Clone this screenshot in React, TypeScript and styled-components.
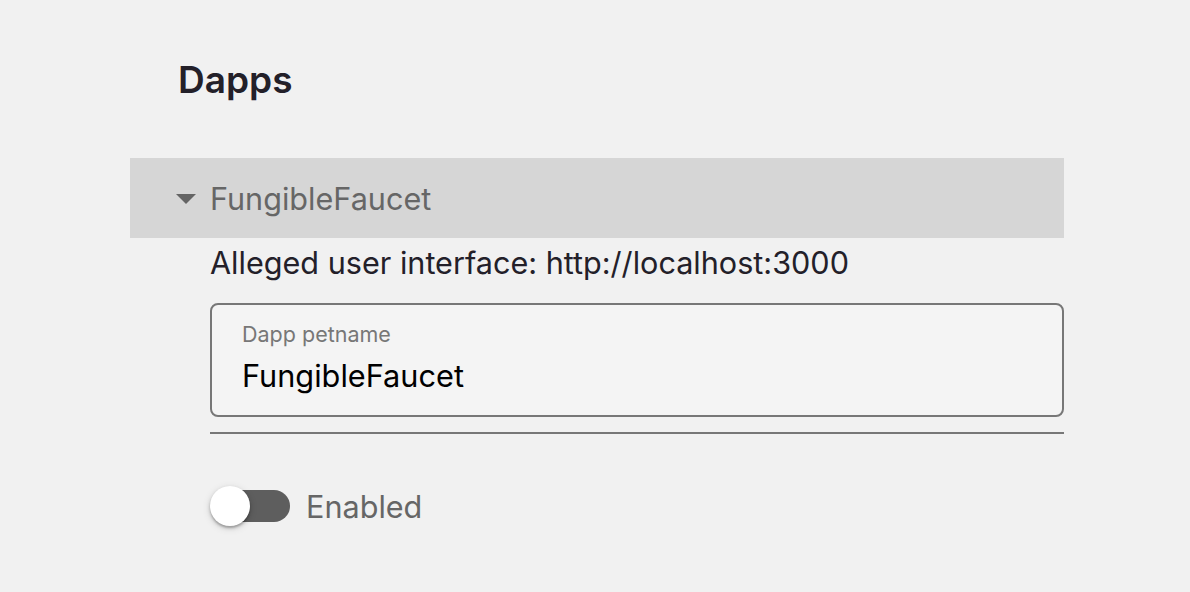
import React, { useState } from 'react';
import styled, { createGlobalStyle } from 'styled-components';

const GlobalStyle = createGlobalStyle`
  html, body {
    margin: 0;
    padding: 0;
    background: #f1f1f1;
    font-family: Inter, "Noto Sans", "Liberation Sans", sans-serif;
  }
`;

const Page = styled.div`
  width: 1190px;
  height: 592px;
  padding: 58px 126px 0 130px;
  box-sizing: border-box;
  background: #f1f1f1;
`;

const Title = styled.h1`
  margin: 0 0 0 48px;
  font-size: 37px;
  font-weight: 600;
  color: #232029;
  line-height: 44px;
`;

const Panel = styled.div`
  margin-top: 56px;
  width: 934px;
`;

const PanelHeader = styled.div`
  height: 80px;
  background: #d6d6d6;
  display: flex;
  align-items: center;
  padding-left: 46px;
  gap: 14px;
  cursor: pointer;
`;

const Caret = styled.span`
  width: 0;
  height: 0;
  border-left: 10px solid transparent;
  border-right: 10px solid transparent;
  border-top: 10px solid #646464;
  margin-top: 2px;
`;

const HeaderText = styled.span`
  font-size: 30.6px;
  color: #666666;
`;

const PanelBody = styled.div`
  padding: 5px 0 0 80px;
  display: flex;
  flex-direction: column;
`;

const Alleged = styled.div`
  font-size: 30.6px;
  color: #232029;
  line-height: 40px;
`;

const Field = styled.div`
  margin-top: 20px;
  height: 114px;
  border: 2px solid #777777;
  border-radius: 8px;
  background: #f4f4f4;
  box-sizing: border-box;
  padding: 16px 30px 0 30px;
  display: flex;
  flex-direction: column;
`;

const FieldLabel = styled.label`
  font-size: 21.5px;
  color: #777777;
  line-height: 26px;
`;

const FieldInput = styled.input`
  margin-top: 11px;
  border: none;
  outline: none;
  background: transparent;
  padding: 0;
  font-family: inherit;
  font-size: 30.7px;
  color: #000000;
  line-height: 36px;
`;

const Divider = styled.hr`
  margin: 15px 0 0 0;
  border: none;
  height: 2px;
  background: #777777;
`;

const SwitchRow = styled.label`
  margin-top: 51px;
  display: flex;
  align-items: center;
  gap: 14px;
  cursor: pointer;
`;

const SwitchBox = styled.span`
  position: relative;
  width: 82px;
  height: 42px;
  display: inline-flex;
  align-items: center;
`;

const Track = styled.span<{ on: boolean }>`
  margin-left: 8px;
  width: 72px;
  height: 32px;
  border-radius: 16px;
  background: ${props => (props.on ? '#3f51b5' : '#5e5e5e')};
`;

const Thumb = styled.span<{ on: boolean }>`
  position: absolute;
  top: 1px;
  left: ${props => (props.on ? '40px' : '0px')};
  width: 40px;
  height: 40px;
  border-radius: 50%;
  background: #ffffff;
  box-shadow: 0 2px 2px rgba(0, 0, 0, 0.2), 0 2px 4px rgba(0, 0, 0, 0.14), 0 2px 8px rgba(0, 0, 0, 0.12);
`;

const SwitchText = styled.span`
  font-size: 30.6px;
  color: #666666;
`;

const App = () => {
  const [name, setName] = useState('FungibleFaucet');
  const [enabled, setEnabled] = useState(false);

  return (
    <Page>
      <GlobalStyle />
      <Title>Dapps</Title>
      <Panel>
        <PanelHeader>
          <Caret />
          <HeaderText>FungibleFaucet</HeaderText>
        </PanelHeader>
        <PanelBody>
          <Alleged>Alleged user interface: http://localhost:3000</Alleged>
          <Field>
            <FieldLabel>Dapp petname</FieldLabel>
            <FieldInput value={name} onChange={e => setName(e.target.value)} />
          </Field>
          <Divider />
          <SwitchRow onClick={() => setEnabled(!enabled)}>
            <SwitchBox>
              <Track on={enabled} />
              <Thumb on={enabled} />
            </SwitchBox>
            <SwitchText>Enabled</SwitchText>
          </SwitchRow>
        </PanelBody>
      </Panel>
    </Page>
  );
};

export default App;
